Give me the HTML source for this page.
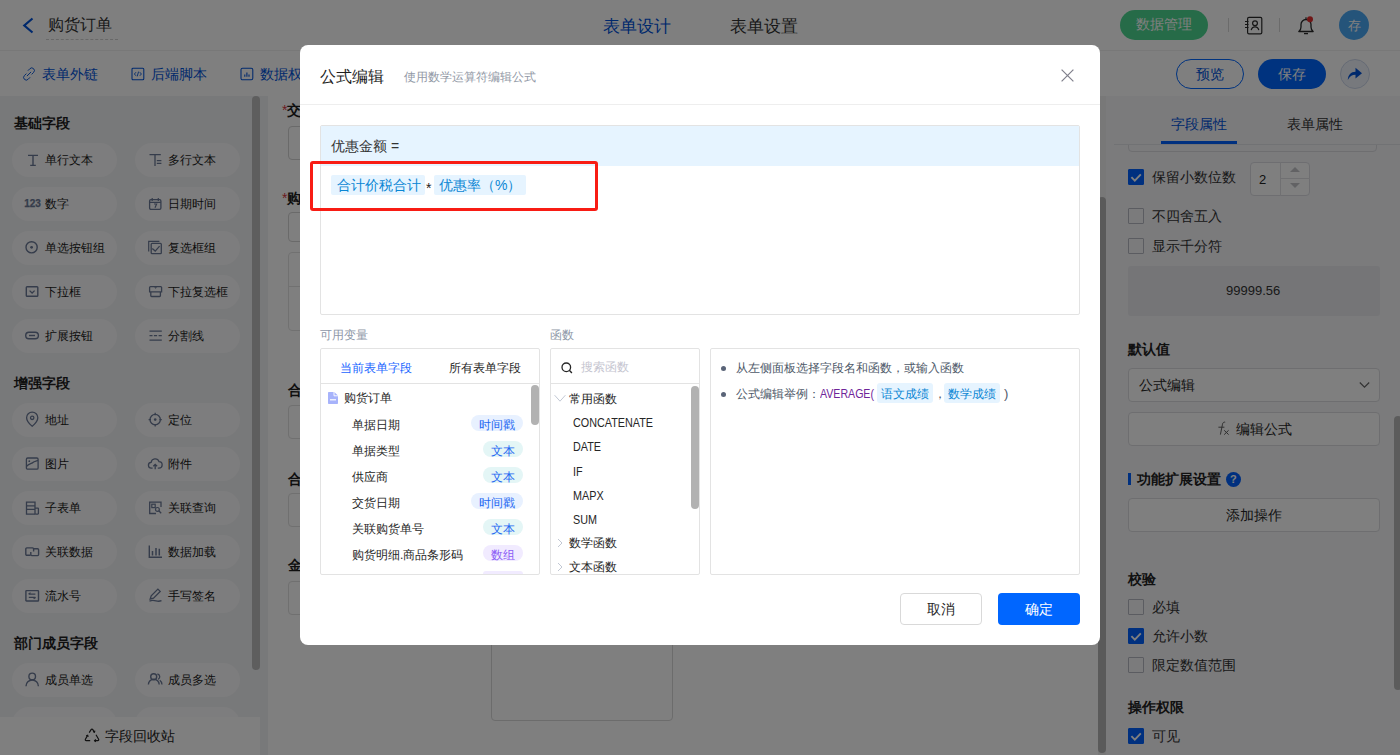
<!DOCTYPE html>
<html><head><meta charset="utf-8">
<style>
*{box-sizing:border-box;margin:0;padding:0}
html,body{width:1400px;height:755px;overflow:hidden;background:#fff;font-family:"Liberation Sans",sans-serif;color:#222;font-size:13px}
.a{position:absolute}
.t{position:absolute;white-space:nowrap;line-height:1}
svg{display:block}
/* header */
#hdr{left:0;top:0;width:1400px;height:51px;background:#fff;border-bottom:1px solid #f0f0f0}
#tb{left:0;top:51px;width:1400px;height:45px;background:#fff}
#lp{left:0;top:96px;width:268px;height:659px;background:#f1f2f5}
.sec{position:absolute;left:14px;font-size:14px;font-weight:bold;color:#1f1f1f;line-height:1}
.chip{position:absolute;width:105px;height:34px;border-radius:17px;background:#fbfbfc}
.chip .ic{position:absolute;left:12px;top:8px;width:16px;height:16px;overflow:visible}
.chip span{position:absolute;left:33px;top:11px;font-size:12px;line-height:13px;color:#1a1a1a}
#fa{left:268px;top:96px;width:830px;height:659px;background:#fff}
#rp{left:1106px;top:96px;width:294px;height:659px;background:#f6f6f9}
.cb{position:absolute;left:1128px;width:16px;height:16px;border:1px solid #b6b9c2;border-radius:1px;background:transparent}
.cb.on{background:#0060ff;border-color:#0060ff}
.lbl{position:absolute;left:1152px;font-size:14px;line-height:14px;color:#333}
.bold{position:absolute;left:1128px;font-size:14px;font-weight:bold;color:#222;line-height:14px}
.btnbox{position:absolute;left:1128px;width:252px;height:34px;border:1px solid #dcdde0;border-radius:4px;background:#fff}
#mask{left:0;top:0;width:1400px;height:755px;background:rgba(0,0,0,.5)}
#modal{left:300px;top:45px;width:800px;height:600px;background:#fff;border-radius:8px}
.bdg{position:absolute;height:16px;border-radius:8px;font-size:12px;line-height:16px;padding-top:2px;text-align:center}
.bdg.b{background:#e8f1ff;color:#2468f2}
.bdg.g{background:#e4f6f6;color:#2468f2}
.bdg.p{background:#f1ebff;color:#8b5cf6}
</style></head><body>

<!-- HEADER -->
<div id="hdr" class="a"></div>
<div class="a" style="left:22px;top:17px"><svg width="13" height="17" viewBox="0 0 13 17"><path d="M10.5 1.5 L2.3 8.5 L10.5 15.5" fill="none" stroke="#0052d9" stroke-width="2.2"/></svg></div>
<div class="t" style="left:48px;top:17px;font-size:16px;color:#333">购货订单</div>
<div class="a" style="left:46px;top:39px;width:72px;border-top:1px dashed #d0d0d0"></div>
<div class="t" style="left:603px;top:18px;font-size:17px;color:#0052d9">表单设计</div>
<div class="t" style="left:730px;top:18px;font-size:17px;color:#333">表单设置</div>

<div class="a" style="left:1120px;top:10px;width:88px;height:30px;border-radius:15px;background:#4dd691"></div>
<div class="t" style="left:1136px;top:17px;font-size:14px;color:#fff">数据管理</div>
<div class="a" style="left:1228px;top:18px;width:1px;height:14px;background:#d6d6d6"></div>
<div class="a" style="left:1244px;top:16px"><svg width="19" height="19" viewBox="0 0 19 19"><rect x="3.6" y="1.4" width="14.2" height="16.4" rx="1.4" fill="none" stroke="#2b2b2b" stroke-width="1.2"/><circle cx="11" cy="7.2" r="2.4" fill="none" stroke="#2b2b2b" stroke-width="1.2"/><path d="M7.2 14.2c0.4-2.2 2-3.4 3.8-3.4s3.4 1.2 3.8 3.4" fill="none" stroke="#2b2b2b" stroke-width="1.2"/><path d="M1 5.5h3.5M1 8.5h3.5M1 11.5h3.5" stroke="#2b2b2b" stroke-width="1.1"/></svg></div>
<div class="a" style="left:1279px;top:18px;width:1px;height:14px;background:#d6d6d6"></div>
<div class="a" style="left:1297px;top:16px"><svg width="18" height="19" viewBox="0 0 18 19"><path d="M1.8 15.5c1.5-1 2.2-2.3 2.2-4.5V8.5a5 5 0 0 1 10 0V11c0 2.2 0.7 3.5 2.2 4.5z" fill="none" stroke="#2b2b2b" stroke-width="1.3" stroke-linejoin="round"/><path d="M9 1.2v2" stroke="#2b2b2b" stroke-width="1.2"/><path d="M7 17.6h4" stroke="#2b2b2b" stroke-width="1.3"/><circle cx="13" cy="3.2" r="3" fill="#e02c2c"/></svg></div>
<div class="a" style="left:1339px;top:10px;width:30px;height:30px;border-radius:50%;background:#4aa8f5"></div>
<div class="t" style="left:1348px;top:19px;font-size:13px;color:#fff">存</div>

<!-- TOOLBAR -->
<div id="tb" class="a"></div>
<div class="a" style="left:22px;top:67px"><svg width="14" height="14" viewBox="0 0 14 14"><path d="M6.2 3.4l1.7-1.7a2.6 2.6 0 0 1 3.7 3.7L9.9 7.1 M7.8 10.6l-1.7 1.7a2.6 2.6 0 0 1-3.7-3.7L4.1 6.9 M5.2 8.8l3.6-3.6" fill="none" stroke="#0052d9" stroke-width="0.95" stroke-linecap="round"/></svg></div>
<div class="t" style="left:42px;top:67px;font-size:14px;color:#0052d9">表单外链</div>
<div class="a" style="left:131px;top:67px"><svg width="14" height="14" viewBox="0 0 14 14"><rect x="1" y="1.2" width="11.8" height="11.6" rx="1" fill="none" stroke="#0052d9" stroke-width="1.05"/><path d="M5 5.2L3.4 7l1.6 1.8M8.8 5.2L10.4 7 8.8 8.8M7.6 4.6L6.2 9.4" fill="none" stroke="#0052d9" stroke-width="0.9"/></svg></div>
<div class="t" style="left:151px;top:67px;font-size:14px;color:#0052d9">后端脚本</div>
<div class="a" style="left:240px;top:67px"><svg width="14" height="14" viewBox="0 0 14 14"><rect x="1" y="1.2" width="11.8" height="11.6" rx="1.5" fill="none" stroke="#0052d9" stroke-width="1.05"/><path d="M4.8 7.5v2.3M6.9 5.5v4.3M9 7.5v2.3" stroke="#0052d9" stroke-width="1.1"/></svg></div>
<div class="t" style="left:260px;top:67px;font-size:14px;color:#0052d9">数据权限</div>

<div class="a" style="left:1176px;top:59px;width:68px;height:30px;border-radius:15px;border:1px solid #0066ff;background:#fff"></div>
<div class="t" style="left:1196px;top:67px;font-size:14px;color:#0052d9">预览</div>
<div class="a" style="left:1258px;top:59px;width:68px;height:30px;border-radius:15px;background:#0066ff"></div>
<div class="t" style="left:1278px;top:67px;font-size:14px;color:#fff">保存</div>
<div class="a" style="left:1340px;top:59px;width:30px;height:30px;border-radius:50%;border:1px solid #ccd6ea;background:#eff3fa"></div>
<div class="a" style="left:1347px;top:67px"><svg width="16" height="14" viewBox="0 0 16 14"><path d="M0.8 13 C1 8 4 4.8 8.5 4.8 V0.8 L15 6.2 L8.5 11.5 V7.8 C5 7.8 2.5 9.5 0.8 13Z" fill="#0052d9"/></svg></div>

<!-- LEFT PANEL -->
<div id="lp" class="a"></div>
<div class="sec" style="top:116px">基础字段</div>
<div class="sec" style="top:376px">增强字段</div>
<div class="sec" style="top:636px">部门成员字段</div>

<div id="chips">
<div class="chip" style="left:12px;top:143px"><svg class="ic" viewBox="0 0 16 16"><path d="M4 4.4h10M6.2 14.4h5.6M9 4.4v10" fill="none" stroke="#6a7896" stroke-width="1.4"/></svg><span>单行文本</span></div>
<div class="chip" style="left:135px;top:143px"><svg class="ic" viewBox="0 0 16 16"><path d="M2.5 3.6h11.3M8 3.6v11.4M9.8 9.6h4.6M9.8 12.3h4.6" fill="none" stroke="#6a7896" stroke-width="1.3"/></svg><span>多行文本</span></div>
<div class="chip" style="left:12px;top:187px"><svg class="ic" viewBox="0 0 16 16"><text x="0.3" y="12.2" font-size="10" font-weight="bold" fill="#6a7896" stroke="#6a7896" stroke-width="0.25" font-family="Liberation Sans" letter-spacing="-0.1">123</text></svg><span>数字</span></div>
<div class="chip" style="left:135px;top:187px"><svg class="ic" viewBox="0 0 16 16"><rect x="2.6" y="4.6" width="11.3" height="9.8" rx="1.3" fill="none" stroke="#6a7896" stroke-width="1.3"/><path d="M5.2 3v3M11.3 3v3M2.6 7.3h11.3M7 9h2.6l-1.6 3.8" fill="none" stroke="#6a7896" stroke-width="1.2"/></svg><span>日期时间</span></div>
<div class="chip" style="left:12px;top:231px"><svg class="ic" viewBox="0 0 16 16"><circle cx="7.6" cy="8.3" r="5.6" fill="none" stroke="#6a7896" stroke-width="1.4"/><circle cx="7.6" cy="8.3" r="1.4" fill="#6a7896"/></svg><span>单选按钮组</span></div>
<div class="chip" style="left:135px;top:231px"><svg class="ic" viewBox="0 0 16 16"><path d="M1.7 12.5V2.3h10.7" fill="none" stroke="#6a7896" stroke-width="1.2"/><rect x="4.2" y="4.4" width="10.1" height="10.2" rx="0.9" fill="none" stroke="#6a7896" stroke-width="1.3"/><path d="M5.3 9.6l2.9 2.5 4.4-5" fill="none" stroke="#6a7896" stroke-width="1.3"/></svg><span>复选框组</span></div>
<div class="chip" style="left:12px;top:275px"><svg class="ic" viewBox="0 0 16 16"><rect x="2.3" y="3.8" width="11.5" height="9.5" rx="0.8" fill="none" stroke="#6a7896" stroke-width="1.4"/><path d="M5.6 7.6l2.5 2.4 2.5-2.4" fill="none" stroke="#6a7896" stroke-width="1.3"/></svg><span>下拉框</span></div>
<div class="chip" style="left:135px;top:275px"><svg class="ic" viewBox="0 0 16 16"><path d="M2.6 8.9V4.5a0.9 0.9 0 0 1 0.9-0.9h10.2a0.9 0.9 0 0 1 0.9 0.9v4.4z" fill="none" stroke="#6a7896" stroke-width="1.3"/><path d="M3.8 8.9v3.8a0.8 0.8 0 0 0 0.8 0.8h8a0.8 0.8 0 0 0 0.8-0.8V8.9" fill="none" stroke="#6a7896" stroke-width="1.3"/><path d="M7.2 4.2l1.4 1.6 1.4-1.6z" fill="#6a7896"/></svg><span>下拉复选框</span></div>
<div class="chip" style="left:12px;top:319px"><svg class="ic" viewBox="0 0 16 16"><rect x="1.7" y="5.3" width="12.7" height="6.4" rx="3.2" fill="none" stroke="#6a7896" stroke-width="1.4"/><path d="M5 8.5h6" fill="none" stroke="#6a7896" stroke-width="1.4"/></svg><span>扩展按钮</span></div>
<div class="chip" style="left:135px;top:319px"><svg class="ic" viewBox="0 0 16 16"><path d="M2.5 4.2h12.3M2.5 13.2h12.3M2.5 8.6h3M6.9 8.6h3.2M11.6 8.6h3.2" fill="none" stroke="#6a7896" stroke-width="1.2"/></svg><span>分割线</span></div>
<div class="chip" style="left:12px;top:403px"><svg class="ic" viewBox="0 0 16 16"><path d="M8.2 15.2s-5.6-4.6-5.6-8.5a5.6 5.6 0 0 1 11.2 0c0 3.9-5.6 8.5-5.6 8.5z" fill="none" stroke="#6a7896" stroke-width="1.3"/><circle cx="8.2" cy="6.8" r="1.7" fill="none" stroke="#6a7896" stroke-width="1.3"/></svg><span>地址</span></div>
<div class="chip" style="left:135px;top:403px"><svg class="ic" viewBox="0 0 16 16"><circle cx="8.2" cy="8.6" r="5.2" fill="none" stroke="#6a7896" stroke-width="1.3"/><circle cx="8.2" cy="8.6" r="1.3" fill="#6a7896"/><path d="M8.2 1.8v2.4M8.2 13v2.4M1.6 8.6H4M12.4 8.6h2.4" fill="none" stroke="#6a7896" stroke-width="1.3"/></svg><span>定位</span></div>
<div class="chip" style="left:12px;top:447px"><svg class="ic" viewBox="0 0 16 16"><rect x="2.4" y="3" width="11.7" height="11.2" rx="1.3" fill="none" stroke="#6a7896" stroke-width="1.3"/><path d="M2.6 11.5c2-3 5-2.5 7-4.5l4.4-1.6" fill="none" stroke="#6a7896" stroke-width="1.2"/><circle cx="5.3" cy="6.2" r="0.9" fill="#6a7896"/></svg><span>图片</span></div>
<div class="chip" style="left:135px;top:447px"><svg class="ic" viewBox="0 0 16 16"><path d="M5.6 13.2H4.6a2.9 2.9 0 0 1-0.5-5.8A4.1 4.1 0 0 1 12 6.6a3.2 3.2 0 0 1-0.3 6.6H10.8" fill="none" stroke="#6a7896" stroke-width="1.3"/><path d="M8.2 14.3V9.4M6.3 11.2l1.9-1.9 1.9 1.9" fill="none" stroke="#6a7896" stroke-width="1.3"/></svg><span>附件</span></div>
<div class="chip" style="left:12px;top:491px"><svg class="ic" viewBox="0 0 16 16"><path d="M11 9.2V3.1H2.5v12h8.5" fill="none" stroke="#6a7896" stroke-width="1.3"/><path d="M2.5 6.8H11M2.5 10.3H11" fill="none" stroke="#6a7896" stroke-width="1.2"/><rect x="11" y="9.2" width="3.4" height="5.9" rx="0.5" fill="none" stroke="#6a7896" stroke-width="1.3"/></svg><span>子表单</span></div>
<div class="chip" style="left:135px;top:491px"><svg class="ic" viewBox="0 0 16 16"><path d="M14 8V3.1H2.7v11.4H9" fill="none" stroke="#6a7896" stroke-width="1.3"/><rect x="4.8" y="5.2" width="3.4" height="3.4" fill="none" stroke="#6a7896" stroke-width="1.2"/><circle cx="10.4" cy="10.4" r="1.9" fill="none" stroke="#6a7896" stroke-width="1.2"/><path d="M11.8 11.8l2.4 2.4" fill="none" stroke="#6a7896" stroke-width="1.3"/></svg><span>关联查询</span></div>
<div class="chip" style="left:12px;top:535px"><svg class="ic" viewBox="0 0 16 16"><path d="M6.6 12.2H2.8a1 1 0 0 1-1-1V5.9a1 1 0 0 1 1-1h5.8a1 1 0 0 1 1 1v2.6" fill="none" stroke="#6a7896" stroke-width="1.4"/><path d="M9.4 5.8h4.2a1 1 0 0 1 1 1v4.8a1 1 0 0 1-1 1H7.8a1 1 0 0 1-1-1V9" fill="none" stroke="#6a7896" stroke-width="1.4"/></svg><span>关联数据</span></div>
<div class="chip" style="left:135px;top:535px"><svg class="ic" viewBox="0 0 16 16"><path d="M2.3 2.6v11.6H15" fill="none" stroke="#6a7896" stroke-width="1.4"/><path d="M5.5 8v4.6M9 5v7.6M12.3 5.8v6.8" fill="none" stroke="#6a7896" stroke-width="1.5"/></svg><span>数据加载</span></div>
<div class="chip" style="left:12px;top:579px"><svg class="ic" viewBox="0 0 16 16"><rect x="1.9" y="3.6" width="12.6" height="10.4" rx="0.6" fill="none" stroke="#6a7896" stroke-width="1.4"/><path d="M4.8 7.1h6.6M11.4 10.4H4.8" fill="none" stroke="#6a7896" stroke-width="1.4"/><path d="M4.6 7.1l2-1.3M11.6 10.4l-2 1.3" fill="none" stroke="#6a7896" stroke-width="1.2"/></svg><span>流水号</span></div>
<div class="chip" style="left:135px;top:579px"><svg class="ic" viewBox="0 0 16 16"><path d="M3.2 12l1-3.2 6.7-6.7 2.3 2.3-6.7 6.7z" fill="none" stroke="#6a7896" stroke-width="1.3"/><path d="M2.5 14.2c2-1 4.5-0.8 6.5-0.3 2 0.5 3.5 0.6 5.5-0.2" fill="none" stroke="#6a7896" stroke-width="1.3"/></svg><span>手写签名</span></div>
<div class="chip" style="left:12px;top:663px"><svg class="ic" viewBox="0 0 16 16"><circle cx="8.2" cy="5.4" r="3.3" fill="none" stroke="#6a7896" stroke-width="1.4"/><path d="M2 15.2a6.2 6.2 0 0 1 12.4 0" fill="none" stroke="#6a7896" stroke-width="1.4"/></svg><span>成员单选</span></div>
<div class="chip" style="left:135px;top:663px"><svg class="ic" viewBox="0 0 16 16"><circle cx="6.7" cy="5.8" r="3" fill="none" stroke="#6a7896" stroke-width="1.4"/><path d="M1.4 13.6a5.4 5.4 0 0 1 10.8 0" fill="none" stroke="#6a7896" stroke-width="1.4"/><path d="M10.4 3a2.9 2.9 0 0 1 0.8 5.4M12.8 9.3a5.5 5.5 0 0 1 2.2 4.3" fill="none" stroke="#6a7896" stroke-width="1.3"/></svg><span>成员多选</span></div>
<div class="chip" style="left:12px;top:707px"></div>
<div class="chip" style="left:135px;top:707px"></div>
</div>

<div class="a" style="left:252px;top:96px;width:8px;height:574px;border-radius:4px;background:#bdbdbd"></div>
<div class="a" style="left:0;top:717px;width:260px;height:38px;background:#fff"></div>
<div class="a" style="left:84px;top:728px"><svg width="16" height="15" viewBox="0 0 16 15"><path d="M5.2 4.6L7.1 1.6a1 1 0 0 1 1.7 0l1.6 2.6" fill="none" stroke="#222" stroke-width="1.2"/><path d="M9 3.6l1.5 0.7 0.4-1.7" fill="none" stroke="#222" stroke-width="1.1"/><path d="M12 6.8l2.6 4.4a1 1 0 0 1-0.8 1.5H10.6" fill="none" stroke="#222" stroke-width="1.2"/><path d="M11.8 11.3l-1.3 1.4 1.3 1.2" fill="none" stroke="#222" stroke-width="1.1"/><path d="M6.2 12.7H2.2a1 1 0 0 1-0.8-1.5L3.6 7.4" fill="none" stroke="#222" stroke-width="1.2"/><path d="M2.2 7.8l1.5-0.6 0.5 1.6" fill="none" stroke="#222" stroke-width="1.1"/></svg></div>
<div class="t" style="left:105px;top:729px;font-size:14px;color:#222">字段回收站</div>

<!-- FORM AREA -->
<div id="fa" class="a"></div>
<div class="t" style="left:282px;top:103px;font-size:14px;font-weight:bold;color:#1f1f1f"><span style="color:#d9363e;font-weight:normal">*</span>交货日期</div>
<div class="a" style="left:288px;top:126px;width:300px;height:34px;border:1px solid #d4d4d4;border-radius:4px"></div>
<div class="t" style="left:282px;top:191px;font-size:14px;font-weight:bold;color:#1f1f1f"><span style="color:#d9363e;font-weight:normal">*</span>购货明细</div>
<div class="a" style="left:288px;top:212px;width:300px;height:30px;border:1px solid #d4d4d4;border-radius:4px"></div>
<div class="a" style="left:288px;top:252px;width:300px;height:79px;border:1px solid #e2e2e2;border-radius:4px"></div>
<div class="a" style="left:288px;top:286px;width:300px;height:1px;background:#e2e2e2"></div>
<div class="t" style="left:288px;top:383px;font-size:14px;font-weight:bold;color:#1f1f1f">合计</div>
<div class="a" style="left:288px;top:405px;width:300px;height:34px;border:1px solid #e0e0e0;border-radius:4px"></div>
<div class="t" style="left:288px;top:472px;font-size:14px;font-weight:bold;color:#1f1f1f">合计</div>
<div class="a" style="left:288px;top:493px;width:300px;height:34px;border:1px solid #e0e0e0;border-radius:4px"></div>
<div class="t" style="left:288px;top:558px;font-size:14px;font-weight:bold;color:#1f1f1f">金额</div>
<div class="a" style="left:288px;top:581px;width:300px;height:34px;border:1px solid #e0e0e0;border-radius:4px"></div>
<div class="a" style="left:491px;top:620px;width:182px;height:101px;border:1px solid #d8d8d8;border-radius:4px"></div>
<div class="a" style="left:1098px;top:96px;width:8px;height:659px;background:#f0f0f0"></div>
<div class="a" style="left:1098px;top:197px;width:8px;height:556px;border-radius:4px;background:#b5b5b5"></div>

<!-- RIGHT PANEL -->
<div id="rp" class="a"></div>
<div class="a" style="left:1128px;top:120px;width:249px;height:32px;border:1px solid #dcdde0;border-radius:4px"></div>
<div class="a" style="left:1106px;top:96px;width:294px;height:49px;background:#f6f6f9"></div>
<div class="t" style="left:1171px;top:117px;font-size:14px;color:#0052d9">字段属性</div>
<div class="t" style="left:1287px;top:117px;font-size:14px;color:#333">表单属性</div>
<div class="a" style="left:1114px;top:144px;width:286px;height:1px;background:#e3e4e8"></div>
<div class="a" style="left:1161px;top:141px;width:76px;height:3px;background:#0060ff"></div>

<div class="cb on" style="top:169px"><svg width="14" height="14" viewBox="0 0 14 14" style="position:absolute;left:0;top:0"><path d="M2.4 7.2l3.4 3.4 6-6.2" fill="none" stroke="#fff" stroke-width="1.9"/></svg></div>
<div class="lbl" style="top:170px">保留小数位数</div>
<div class="a" style="left:1250px;top:162px;width:60px;height:34px;border:1px solid #dcdde2;border-radius:4px;background:#fff"></div>
<div class="a" style="left:1280px;top:162px;width:1px;height:34px;background:#e0e1e5"></div>
<div class="a" style="left:1280px;top:178px;width:30px;height:1px;background:#e0e1e5"></div>
<div class="a" style="left:1290px;top:167px;width:0;height:0;border-left:5px solid transparent;border-right:5px solid transparent;border-bottom:5px solid #c4c5c9"></div>
<div class="a" style="left:1290px;top:183px;width:0;height:0;border-left:5px solid transparent;border-right:5px solid transparent;border-top:5px solid #c4c5c9"></div>
<div class="t" style="left:1259px;top:173px;font-size:13px;color:#222">2</div>

<div class="cb" style="top:208px"></div>
<div class="lbl" style="top:209px">不四舍五入</div>
<div class="cb" style="top:238px"></div>
<div class="lbl" style="top:239px">显示千分符</div>
<div class="a" style="left:1128px;top:266px;width:252px;height:50px;background:#eaebee;border-radius:3px"></div>
<div class="t" style="left:1226px;top:284px;font-size:13px;color:#333">99999.56</div>
<div class="bold" style="top:342px">默认值</div>
<div class="a" style="left:1128px;top:368px;width:252px;height:34px;border:1px solid #dcdde0;border-radius:4px;background:#fff"></div>
<div class="t" style="left:1139px;top:378px;font-size:14px;color:#262626">公式编辑</div>
<div class="a" style="left:1359px;top:381px"><svg width="11" height="8" viewBox="0 0 11 8"><path d="M0.8 1.5l4.7 4.7 4.7-4.7" fill="none" stroke="#666" stroke-width="1.2"/></svg></div>
<div class="btnbox" style="top:412px"></div>
<div class="a" style="left:1217px;top:421px"><svg width="14" height="15" viewBox="0 0 14 15"><path d="M8.2 1.2C6.8 0.8 5.8 1.6 5.5 3.2L3.4 13.6M1.4 6.2h6" fill="none" stroke="#5a5a5a" stroke-width="0.95"/><path d="M7.2 9.3l4.4 4.3M11.6 9.3l-4.4 4.3" stroke="#5a5a5a" stroke-width="1"/></svg></div>
<div class="t" style="left:1236px;top:422px;font-size:14px;color:#262626">编辑公式</div>
<div class="a" style="left:1128px;top:473px;width:3px;height:12px;background:#0060ff"></div>
<div class="t" style="left:1137px;top:472px;font-size:14px;font-weight:bold;color:#222">功能扩展设置</div>
<div class="a" style="left:1226px;top:472px;width:15px;height:15px;border-radius:50%;background:#0060ff"></div>
<div class="t" style="left:1230px;top:474px;font-size:11px;font-weight:bold;color:#fff">?</div>
<div class="btnbox" style="top:498px"></div>
<div class="t" style="left:1226px;top:508px;font-size:14px;color:#262626">添加操作</div>
<div class="bold" style="top:572px">校验</div>
<div class="cb" style="top:599px"></div>
<div class="lbl" style="top:600px">必填</div>
<div class="cb on" style="top:628px"><svg width="14" height="14" viewBox="0 0 14 14" style="position:absolute;left:0;top:0"><path d="M2.4 7.2l3.4 3.4 6-6.2" fill="none" stroke="#fff" stroke-width="1.9"/></svg></div>
<div class="lbl" style="top:629px">允许小数</div>
<div class="cb" style="top:657px"></div>
<div class="lbl" style="top:658px">限定数值范围</div>
<div class="bold" style="top:700px">操作权限</div>
<div class="cb on" style="top:728px"><svg width="14" height="14" viewBox="0 0 14 14" style="position:absolute;left:0;top:0"><path d="M2.4 7.2l3.4 3.4 6-6.2" fill="none" stroke="#fff" stroke-width="1.9"/></svg></div>
<div class="lbl" style="top:729px">可见</div>
<div class="a" style="left:1394px;top:416px;width:8px;height:274px;border-radius:4px;background:#b9b9b9"></div>

<div id="mask" class="a"></div>

<!-- MODAL -->
<div id="modal" class="a"></div>
<div class="t" style="left:320px;top:69px;font-size:16px;color:#1f1f1f">公式编辑</div>
<div class="t" style="left:404px;top:71px;font-size:12px;color:#9299a6">使用数学运算符编辑公式</div>
<div class="a" style="left:1061px;top:69px"><svg width="13" height="13" viewBox="0 0 13 13"><path d="M0.6 0.6 L12.4 12.4 M12.4 0.6 L0.6 12.4" stroke="#80808c" stroke-width="1.25"/></svg></div>
<div class="a" style="left:300px;top:104px;width:800px;height:1px;background:#eee"></div>

<div class="a" style="left:320px;top:125px;width:760px;height:190px;border:1px solid #e3e3e3;border-radius:2px"></div>
<div class="a" style="left:321px;top:126px;width:758px;height:40px;background:#e6f4ff"></div>
<div class="t" style="left:331px;top:139px;font-size:14px;color:#333">优惠金额 =</div>
<div class="a" style="left:331px;top:175px;width:94px;height:20px;background:#e6f4ff;border-radius:2px"></div>
<div class="t" style="left:337px;top:178px;font-size:14px;color:#0a86d4">合计价税合计</div>
<div class="t" style="left:426px;top:181px;font-size:14px;color:#222">*</div>
<div class="a" style="left:434px;top:175px;width:92px;height:20px;background:#e6f4ff;border-radius:2px"></div>
<div class="t" style="left:439px;top:178px;font-size:14px;color:#0a86d4">优惠率（%）</div>
<div class="a" style="left:310px;top:161px;width:288px;height:50px;border:3px solid #f81c14;border-radius:3px"></div>

<div class="t" style="left:320px;top:329px;font-size:12px;color:#8e97a8">可用变量</div>
<div class="t" style="left:550px;top:329px;font-size:12px;color:#8e97a8">函数</div>
<div class="a" style="left:320px;top:348px;width:220px;height:227px;border:1px solid #e3e3e3;border-radius:2px"></div>
<div class="a" style="left:550px;top:348px;width:150px;height:227px;border:1px solid #e3e3e3;border-radius:2px"></div>
<div class="a" style="left:710px;top:348px;width:370px;height:227px;border:1px solid #e3e3e3;border-radius:2px"></div>
<div class="a" style="left:321px;top:383px;width:218px;height:1px;background:#e3e3e3"></div>
<div class="a" style="left:551px;top:383px;width:148px;height:1px;background:#e3e3e3"></div>

<div class="t" style="left:340px;top:362px;font-size:12px;color:#1a66ff">当前表单字段</div>
<div class="t" style="left:449px;top:362px;font-size:12px;color:#262626">所有表单字段</div>

<!-- tree -->
<div class="a" style="left:328px;top:392px"><svg width="10" height="12" viewBox="0 0 10 12"><path d="M0 0.8a0.8 0.8 0 0 1 0.8-0.8h5.4L10 3.6v7.6a0.8 0.8 0 0 1-0.8 0.8H0.8A0.8 0.8 0 0 1 0 11.2z" fill="#a7b3fb"/><path d="M6 0v3.8h4" fill="none" stroke="#fff" stroke-width="0.9"/><path d="M2 7.8h6" stroke="#fff" stroke-width="1.2"/></svg></div>
<div class="t" style="left:344px;top:392px;font-size:12px;color:#262626">购货订单</div>
<div class="t" style="left:352px;top:419px;font-size:12px;color:#262626">单据日期</div>
<div class="t" style="left:352px;top:445px;font-size:12px;color:#262626">单据类型</div>
<div class="t" style="left:352px;top:471px;font-size:12px;color:#262626">供应商</div>
<div class="t" style="left:352px;top:497px;font-size:12px;color:#262626">交货日期</div>
<div class="t" style="left:352px;top:523px;font-size:12px;color:#262626">关联购货单号</div>
<div class="t" style="left:352px;top:549px;font-size:12px;color:#262626">购货明细.商品条形码</div>
<div class="bdg b" style="left:471px;top:415px;width:52px">时间戳</div>
<div class="bdg g" style="left:483px;top:441px;width:40px">文本</div>
<div class="bdg g" style="left:483px;top:467px;width:40px">文本</div>
<div class="bdg b" style="left:471px;top:493px;width:52px">时间戳</div>
<div class="bdg g" style="left:483px;top:519px;width:40px">文本</div>
<div class="bdg p" style="left:483px;top:545px;width:40px">数组</div>
<div class="a" style="left:483px;top:571px;width:40px;height:3px;background:#f1ebff;border-radius:4px 4px 0 0"></div>
<div class="a" style="left:531px;top:385px;width:8px;height:40px;border-radius:4px;background:#b2b2b2"></div>

<!-- functions -->
<div class="a" style="left:561px;top:362px"><svg width="12" height="12" viewBox="0 0 12 12"><circle cx="5.3" cy="5.3" r="4.3" fill="none" stroke="#262626" stroke-width="1.3"/><path d="M8.3 8.3l2.6 2.6" stroke="#262626" stroke-width="1.4"/></svg></div>
<div class="t" style="left:581px;top:361px;font-size:12px;color:#c5c5d0">搜索函数</div>
<div class="a" style="left:554px;top:394px"><svg width="12" height="9" viewBox="0 0 12 9"><path d="M0.6 1.2l5.4 6 5.4-6" fill="none" stroke="#c2c8d4" stroke-width="1"/></svg></div>
<div class="t" style="left:569px;top:393px;font-size:12px;color:#262626">常用函数</div>
<div class="t" style="left:573px;top:416px;font-size:13px;color:#262626"><span style="display:inline-block;transform:scaleX(0.83);transform-origin:0 0">CONCATENATE</span></div>
<div class="t" style="left:573px;top:440px;font-size:13px;color:#262626"><span style="display:inline-block;transform:scaleX(0.83);transform-origin:0 0">DATE</span></div>
<div class="t" style="left:573px;top:465px;font-size:13px;color:#262626"><span style="display:inline-block;transform:scaleX(0.83);transform-origin:0 0">IF</span></div>
<div class="t" style="left:573px;top:489px;font-size:13px;color:#262626"><span style="display:inline-block;transform:scaleX(0.83);transform-origin:0 0">MAPX</span></div>
<div class="t" style="left:573px;top:513px;font-size:13px;color:#262626"><span style="display:inline-block;transform:scaleX(0.83);transform-origin:0 0">SUM</span></div>
<div class="a" style="left:557px;top:538px"><svg width="6" height="10" viewBox="0 0 6 10"><path d="M1 1l4 4-4 4" fill="none" stroke="#c2c8d4" stroke-width="1"/></svg></div>
<div class="t" style="left:569px;top:537px;font-size:12px;color:#262626">数学函数</div>
<div class="a" style="left:557px;top:562px"><svg width="6" height="10" viewBox="0 0 6 10"><path d="M1 1l4 4-4 4" fill="none" stroke="#c2c8d4" stroke-width="1"/></svg></div>
<div class="t" style="left:569px;top:561px;font-size:12px;color:#262626">文本函数</div>
<div class="a" style="left:691px;top:386px;width:8px;height:123px;border-radius:4px;background:#b2b2b2"></div>

<!-- help -->
<div class="a" style="left:721px;top:366px;width:5px;height:5px;border-radius:50%;background:#5a6478"></div>
<div class="t" style="left:736px;top:362px;font-size:12px;color:#4e5969">从左侧面板选择字段名和函数，或输入函数</div>
<div class="a" style="left:721px;top:392px;width:5px;height:5px;border-radius:50%;background:#5a6478"></div>
<div class="t" style="left:736px;top:388px;font-size:12px;color:#4e5969">公式编辑举例：</div>
<div class="t" style="left:820px;top:387px;font-size:13px;color:#6f2499"><span style="display:inline-block;transform:scaleX(0.815);transform-origin:0 0">AVERAGE(</span></div>
<div class="a" style="left:877px;top:383px;width:56px;height:20px;background:#e6f4ff;border-radius:3px"></div>
<div class="t" style="left:881px;top:388px;font-size:12px;color:#0a86d4">语文成绩</div>
<div class="t" style="left:934px;top:388px;font-size:12px;color:#4e5969">，</div>
<div class="a" style="left:944px;top:383px;width:56px;height:20px;background:#e6f4ff;border-radius:3px"></div>
<div class="t" style="left:948px;top:388px;font-size:12px;color:#0a86d4">数学成绩</div>
<div class="t" style="left:1004px;top:387px;font-size:13px;color:#4e5969">)</div>

<div class="a" style="left:900px;top:593px;width:82px;height:32px;border:1px solid #d9d9d9;border-radius:4px"></div>
<div class="t" style="left:927px;top:602px;font-size:14px;color:#262626">取消</div>
<div class="a" style="left:998px;top:593px;width:82px;height:32px;border-radius:4px;background:#0066ff"></div>
<div class="t" style="left:1025px;top:602px;font-size:14px;color:#fff">确定</div>

</body></html>
